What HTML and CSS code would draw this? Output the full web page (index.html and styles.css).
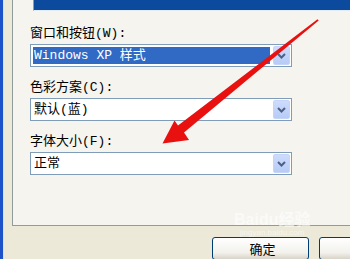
FILE: index.html
```html
<!DOCTYPE html>
<html lang="zh-CN">
<head>
  <meta charset="UTF-8" />
  <title>外观</title>
  <link rel="stylesheet" href="styles.css">
</head>
<body>
<div class="window">
  <div class="frame-edge"></div>
  <div class="dialog">
    <div class="tab-page">
      <div class="preview"></div>
      <div class="fields">
        <div class="field">
          <label>窗口和按钮(W):</label>
          <div class="combo">
            <span class="value selected">Windows XP 样式</span>
            <span class="drop"><svg width="9" height="6" viewBox="0 0 9 6"><polyline points="1,1 4.5,4.5 8,1" fill="none" stroke="#4d6185" stroke-width="2"/></svg></span>
          </div>
        </div>
        <div class="field">
          <label>色彩方案(C):</label>
          <div class="combo">
            <span class="value">默认(蓝)</span>
            <span class="drop"><svg width="9" height="6" viewBox="0 0 9 6"><polyline points="1,1 4.5,4.5 8,1" fill="none" stroke="#4d6185" stroke-width="2"/></svg></span>
          </div>
        </div>
        <div class="field">
          <label>字体大小(F):</label>
          <div class="combo">
            <span class="value">正常</span>
            <span class="drop"><svg width="9" height="6" viewBox="0 0 9 6"><polyline points="1,1 4.5,4.5 8,1" fill="none" stroke="#4d6185" stroke-width="2"/></svg></span>
          </div>
        </div>
      </div>
    </div>
    <div class="buttons">
      <button class="xp-btn">确定</button>
      <button class="xp-btn"></button>
    </div>
  </div>

  <!-- red arrow drawn over the dialog -->
  <svg class="arrow" width="350" height="259" viewBox="0 0 350 259">
    <polygon points="317.5,19.3 318.7,20.6 184,132.5 189,140 162.5,143.5 174.5,120.5 178,125.5" fill="#e8110f"/>
  </svg>

  <div class="watermark">
    <div class="wm-big">Baidu经验</div>
    <div class="wm-small">jingyan.baidu.com</div>
  </div>
</div>
</body>
</html>
```

FILE: styles.css
```css
body {
  margin: 0;
  background: #ece9d8;
  font-family: "Liberation Mono", "Noto Sans CJK SC", monospace;
  font-size: 13px;
  color: #000;
}

.window {
  position: relative;
  display: flex;
  width: 350px;
  height: 259px;
  overflow: hidden;
}

.frame-edge {
  width: 3px;
  flex-shrink: 0;
  background: #1d52c9;
  border-right: 1px solid #d9dff0;
}

.dialog {
  flex: 1;
  padding-left: 8px;
}

.tab-page {
  height: 225px;
  background: #f5f4ef;
  border-left: 1px solid #919b9c;
  border-bottom: 1px solid #919b9c;
}

.preview {
  margin-left: 20px;
  height: 10px;
  background: #0b4a9c;
  border-left: 1px solid #8b9bb2;
  border-bottom: 1px solid #e4ebf5;
}

.fields {
  padding: 15px 0 0 17px;
}

.field {
  margin-bottom: 13px;
}

.field label {
  display: block;
  height: 15px;
  line-height: 15px;
  margin-bottom: 3px;
}

.combo {
  display: flex;
  width: 262px;
  height: 23px;
  box-sizing: border-box;
  padding: 1px;
  border: 1px solid #7f9db9;
  background: #fff;
}

.combo .value {
  flex: 1;
  margin: 1px 3px 1px 1px;
  padding-left: 1px;
  line-height: 17px;
  white-space: nowrap;
}

.combo .value.selected {
  background: #316ac5;
  color: #fff;
}

.combo .drop {
  width: 17px;
  height: 19px;
  box-sizing: border-box;
  display: flex;
  align-items: center;
  justify-content: center;
  border: 1px solid #c6d5f7;
  border-radius: 2px;
  background: linear-gradient(#cddcfc, #b6cbf6);
}

.buttons {
  display: flex;
  gap: 10px;
  padding: 11px 0 0 200px;
}

.xp-btn {
  flex-shrink: 0;
  width: 97px;
  height: 23px;
  border: 1px solid #003c74;
  border-radius: 3px;
  background: linear-gradient(#ffffff, #f2f1ec 70%, #d8d3c8);
  font-family: "Noto Sans CJK SC", sans-serif;
  font-size: 13px;
  line-height: 19px;
  padding: 0 0 0 4px;
}

.arrow {
  position: absolute;
  top: 0;
  left: 0;
  pointer-events: none;
}

.watermark {
  position: absolute;
  left: 234px;
  top: 211px;
  color: rgba(255, 255, 255, 0.6);
  font-family: "Liberation Sans", "Noto Sans CJK SC", sans-serif;
  text-align: center;
  pointer-events: none;
}

.wm-big {
  font-size: 16px;
  font-weight: bold;
  line-height: 17px;
}

.wm-small {
  font-size: 8px;
  line-height: 9px;
}
```
